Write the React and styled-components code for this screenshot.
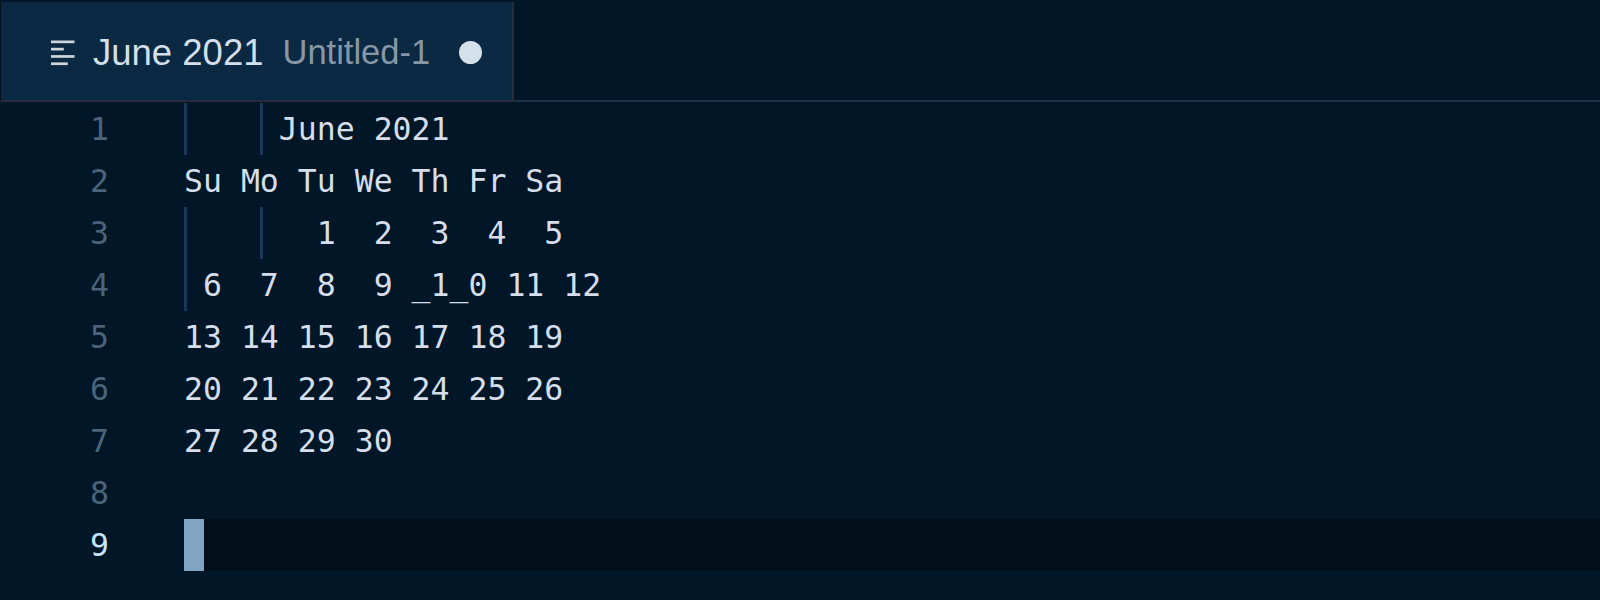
import React from 'react';
import styled, { createGlobalStyle } from 'styled-components';

const CHAR = 19;

const Global = createGlobalStyle`
  html, body {
    margin: 0;
    padding: 0;
    background: #011627;
  }
  body {
    width: 1600px;
    height: 600px;
    overflow: hidden;
  }
`;

const Window = styled.div`
  display: flex;
  flex-direction: column;
  width: 1600px;
  height: 600px;
  background: #011627;
`;

const TabBar = styled.div`
  display: flex;
  height: 102px;
  box-sizing: border-box;
  padding-top: 2px;
  background: #011627;
`;

const Tab = styled.div`
  display: flex;
  align-items: center;
  box-sizing: border-box;
  width: 514px;
  padding-left: 50px;
  padding-top: 3px;
  background: #0b2942;
  border-left: 1px solid #01111d;
  border-right: 2px solid #272b3b;
  border-bottom: 2px solid #272b3b;
  font-family: "Liberation Sans", Arial, sans-serif;
`;

const TabFiller = styled.div`
  flex: 1;
  border-bottom: 2px solid #1b3049;
`;

const FileIcon = styled.svg`
  flex: none;
  display: block;
`;

const Title = styled.span`
  margin-left: 18px;
  font-size: 36.5px;
  color: #d3dfe9;
  white-space: nowrap;
`;

const Description = styled.span`
  margin-left: 19px;
  font-size: 34.5px;
  color: #8797a6;
  white-space: nowrap;
`;

const DirtyDot = styled.span`
  flex: none;
  width: 23px;
  height: 23px;
  border-radius: 50%;
  margin-left: 29px;
  background: #d4e0ea;
`;

const Editor = styled.div`
  display: flex;
  flex-direction: column;
  padding-top: 1px;
  font-family: "DejaVu Sans Mono", "Liberation Mono", monospace;
  font-size: 31.5px;
  line-height: 52px;
`;

const Line = styled.div`
  display: flex;
  height: 52px;
`;

const LineNumber = styled.div`
  flex: none;
  width: 184px;
  box-sizing: border-box;
  padding-right: 75px;
  text-align: right;
  color: ${(p) => (p.$active ? '#c5e4fd' : '#4b6479')};
`;

const Code = styled.div`
  flex: 1;
  position: relative;
  white-space: pre;
  color: #d6deeb;
  background: ${(p) => (p.$active ? '#010f1b' : 'transparent')};
`;

const Guide = styled.span`
  position: absolute;
  top: 0;
  bottom: 0;
  left: ${(p) => p.$col * CHAR}px;
  width: 3px;
  background: #1c365a;
`;

const Cursor = styled.span`
  display: inline-block;
  vertical-align: top;
  width: 20px;
  height: 52px;
  background: #80a4c2;
`;

const lines = [
  { text: '     June 2021', guides: [0, 4] },
  { text: 'Su Mo Tu We Th Fr Sa', guides: [] },
  { text: '       1  2  3  4  5', guides: [0, 4] },
  { text: ' 6  7  8  9 _1_0 11 12', guides: [0] },
  { text: '13 14 15 16 17 18 19', guides: [] },
  { text: '20 21 22 23 24 25 26', guides: [] },
  { text: '27 28 29 30', guides: [] },
  { text: '', guides: [] },
  { text: '', guides: [], active: true },
];

export default function App() {
  return (
    <Window>
      <Global />
      <TabBar>
        <Tab>
          <FileIcon width="24" height="26" viewBox="0 0 24 26">
            <rect x="0" y="0.5" width="23.5" height="2.7" fill="#cfd5db" />
            <rect x="0" y="7.8" width="12.8" height="2.7" fill="#cfd5db" />
            <rect x="0" y="15.1" width="23.5" height="2.7" fill="#cfd5db" />
            <rect x="0" y="22.4" width="16.8" height="2.7" fill="#cfd5db" />
          </FileIcon>
          <Title>June 2021</Title>
          <Description>Untitled-1</Description>
          <DirtyDot />
        </Tab>
        <TabFiller />
      </TabBar>
      <Editor>
        {lines.map((l, i) => (
          <Line key={i}>
            <LineNumber $active={l.active}>{i + 1}</LineNumber>
            <Code $active={l.active}>
              {l.guides.map((g) => (
                <Guide key={g} $col={g} />
              ))}
              {l.active ? <Cursor /> : l.text}
            </Code>
          </Line>
        ))}
      </Editor>
    </Window>
  );
}
